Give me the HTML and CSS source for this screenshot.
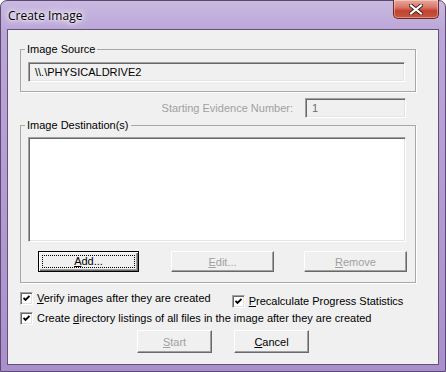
FILE: index.html
```html
<!DOCTYPE html>
<html lang="en">
<head>
    <meta charset="UTF-8">
    <title>Create Image</title>
    <link rel="stylesheet" href="styles.css">
</head>
<body>

<div class="window">
    <div class="titlebar">
        <span class="title">Create Image</span>
        <div class="close">
            <svg width="14" height="11" viewBox="0 0 14 11">
                <path d="M2 1.5 L12 9.5 M12 1.5 L2 9.5" stroke="#3c1f1c" stroke-width="4" stroke-linecap="square"/>
                <path d="M2 1.5 L12 9.5 M12 1.5 L2 9.5" stroke="#fff" stroke-width="2.2" stroke-linecap="square"/>
            </svg>
        </div>
    </div>

    <div class="client">
        <fieldset class="group group-source">
            <legend>Image Source</legend>
            <div class="field field-source">\\.\PHYSICALDRIVE2</div>
        </fieldset>

        <div class="evidence-row">
            <span class="disabled">Starting Evidence Number:</span>
            <div class="field field-number">1</div>
        </div>

        <fieldset class="group group-dest">
            <legend>Image Destination(s)</legend>
            <div class="listbox"></div>
            <div class="list-buttons">
                <button class="btn btn-default btn-add"><span class="focus"><u>A</u>dd...</span></button>
                <button class="btn btn-edit" disabled><u>E</u>dit...</button>
                <button class="btn btn-remove" disabled><u>R</u>emove</button>
            </div>
        </fieldset>

        <div class="options">
            <div class="option-row">
                <label class="check">
                    <span class="box"><svg width="7" height="7" viewBox="0 0 7 7"><path d="M0.5 3 L2.5 5 L6.5 1" stroke="#000" stroke-width="1.8" fill="none"/></svg></span>
                    <span><u>V</u>erify images after they are created</span>
                </label>
                <label class="check check-precalc">
                    <span class="box"><svg width="7" height="7" viewBox="0 0 7 7"><path d="M0.5 3 L2.5 5 L6.5 1" stroke="#000" stroke-width="1.8" fill="none"/></svg></span>
                    <span><u>P</u>recalculate Progress Statistics</span>
                </label>
            </div>
            <label class="check">
                <span class="box"><svg width="7" height="7" viewBox="0 0 7 7"><path d="M0.5 3 L2.5 5 L6.5 1" stroke="#000" stroke-width="1.8" fill="none"/></svg></span>
                <span>Create <u>d</u>irectory listings of all files in the image after they are created</span>
            </label>
        </div>

        <div class="dialog-buttons">
            <button class="btn btn-dialog" disabled><u>S</u>tart</button>
            <button class="btn btn-dialog"><u>C</u>ancel</button>
        </div>
    </div>
</div>

</body>
</html>
```

FILE: styles.css
```css
/* Create Image dialog, Windows 7 basic look */
body {
    margin: 0;
    padding: 0;
    background-color: #fff;
}
.window {
    width: 446px;
    height: 372px;
    box-sizing: border-box;
    border: 1px solid #5c4a70;
    border-radius: 7px 7px 0 0;
    padding: 0 6px 6px 6px;
    background: linear-gradient(180deg, #c9b9e0 0, #bba6d8 30px, #a990cc 100%);
    font-family: "Liberation Sans", Arial, sans-serif;
    font-size: 11px;
    color: #000;
}
.titlebar {
    height: 28px;
    display: flex;
    align-items: flex-start;
    justify-content: space-between;
}
.title {
    font-family: "Open Sans", "Noto Sans", sans-serif;
    font-size: 12px;
    line-height: 16px;
    margin-top: 7px;
    margin-left: 1px;
    color: #000;
    text-shadow: 0 0 6px #fff, 0 0 10px #fff, 0 0 3px #fff;
}
.close {
    width: 44px;
    height: 18px;
    margin-top: -1px;
    margin-right: 0;
    border: 1px solid #6e2b24;
    border-top: none;
    border-radius: 0 0 5px 5px;
    background: linear-gradient(180deg, #e9a99c 0, #d9786a 40%, #c2442f 60%, #c9553f 100%);
    box-shadow: inset 0 0 0 1px rgba(255, 255, 255, 0.35);
    display: flex;
    align-items: center;
    justify-content: center;
}
.client {
    height: 336px;
    box-sizing: border-box;
    border: 1px solid #625273;
    background-color: #f0f0f0;
    display: flex;
    flex-direction: column;
}

/* group boxes */
.group {
    width: 396px;
    box-sizing: border-box;
    margin: 0 0 0 12px;
    padding: 0 0 9px 0;
    border: 1px solid #a8a8a8;
    box-shadow: 1px 1px 0 #fff;
    min-width: 0;
}
.group legend {
    padding: 0 2px;
    margin-left: 4px;
    line-height: 13px;
}
.group-source {
    margin-top: 13px;
}
.group-dest {
    margin-top: 1px;
    padding-bottom: 10px;
}

/* sunken edit fields */
.field,
.listbox {
    box-sizing: border-box;
    border: 1px solid;
    border-color: #a0a0a0 #fff #fff #a0a0a0;
    box-shadow: inset 1px 1px 0 #696969, inset -1px -1px 0 #e3e3e3;
}
.field {
    height: 20px;
    line-height: 18px;
    padding-left: 6px;
    background-color: #f0f0f0;
}
.field-source {
    width: 377px;
    margin: 6px 0 0 7px;
}
.evidence-row {
    display: flex;
    justify-content: flex-end;
    align-items: center;
    gap: 12px;
    margin-top: 6px;
    padding-right: 32px;
}
.disabled {
    color: #a0a0a0;
}
.field-number {
    width: 101px;
    color: #6d6d6d;
}
.listbox {
    width: 378px;
    height: 105px;
    margin: 5px 0 0 7px;
    background-color: #fff;
}

/* classic buttons */
.btn {
    box-sizing: border-box;
    height: 21px;
    padding: 0;
    font-family: "Liberation Sans", Arial, sans-serif;
    font-size: 11px;
    color: #000;
    background-color: #f0f0f0;
    border: 1px solid;
    border-color: #fff #696969 #696969 #fff;
    box-shadow: inset -1px -1px 0 #a0a0a0;
}
.btn:disabled {
    color: #a0a0a0;
}
.btn-default {
    border: 1px solid #000;
    box-shadow: inset 1px 1px 0 #fff, inset -1px -1px 0 #696969, inset -2px -2px 0 #a0a0a0;
    display: flex;
    padding: 3px 3px 3px 3px;
}
.focus {
    flex: 1;
    border: 1px dotted #000;
    line-height: 11px;
}
.list-buttons {
    display: flex;
    margin-top: 9px;
}
.btn-add {
    width: 101px;
    margin-left: 17px;
}
.btn-edit {
    width: 103px;
    margin-left: 32px;
}
.btn-remove {
    width: 103px;
    margin-left: 30px;
}

/* checkboxes */
.options {
    display: flex;
    flex-direction: column;
    gap: 4px;
    margin-top: 9px;
    padding-left: 12px;
}
.option-row {
    display: flex;
    align-items: flex-start;
}
.check {
    display: flex;
    align-items: center;
    gap: 3px;
    line-height: 13px;
}
.check-precalc {
    margin-top: 3px;
    margin-left: 21px;
}
.box {
    width: 13px;
    height: 13px;
    box-sizing: border-box;
    border: 1px solid;
    border-color: #a0a0a0 #fff #fff #a0a0a0;
    box-shadow: inset 1px 1px 0 #696969, inset -1px -1px 0 #e3e3e3;
    background-color: #fff;
    display: flex;
    align-items: center;
    justify-content: center;
    margin-right: 1px;
}

.dialog-buttons {
    display: flex;
    justify-content: center;
    gap: 22px;
    margin-top: 5px;
}
.btn-dialog {
    width: 75px;
    height: 23px;
}
```
